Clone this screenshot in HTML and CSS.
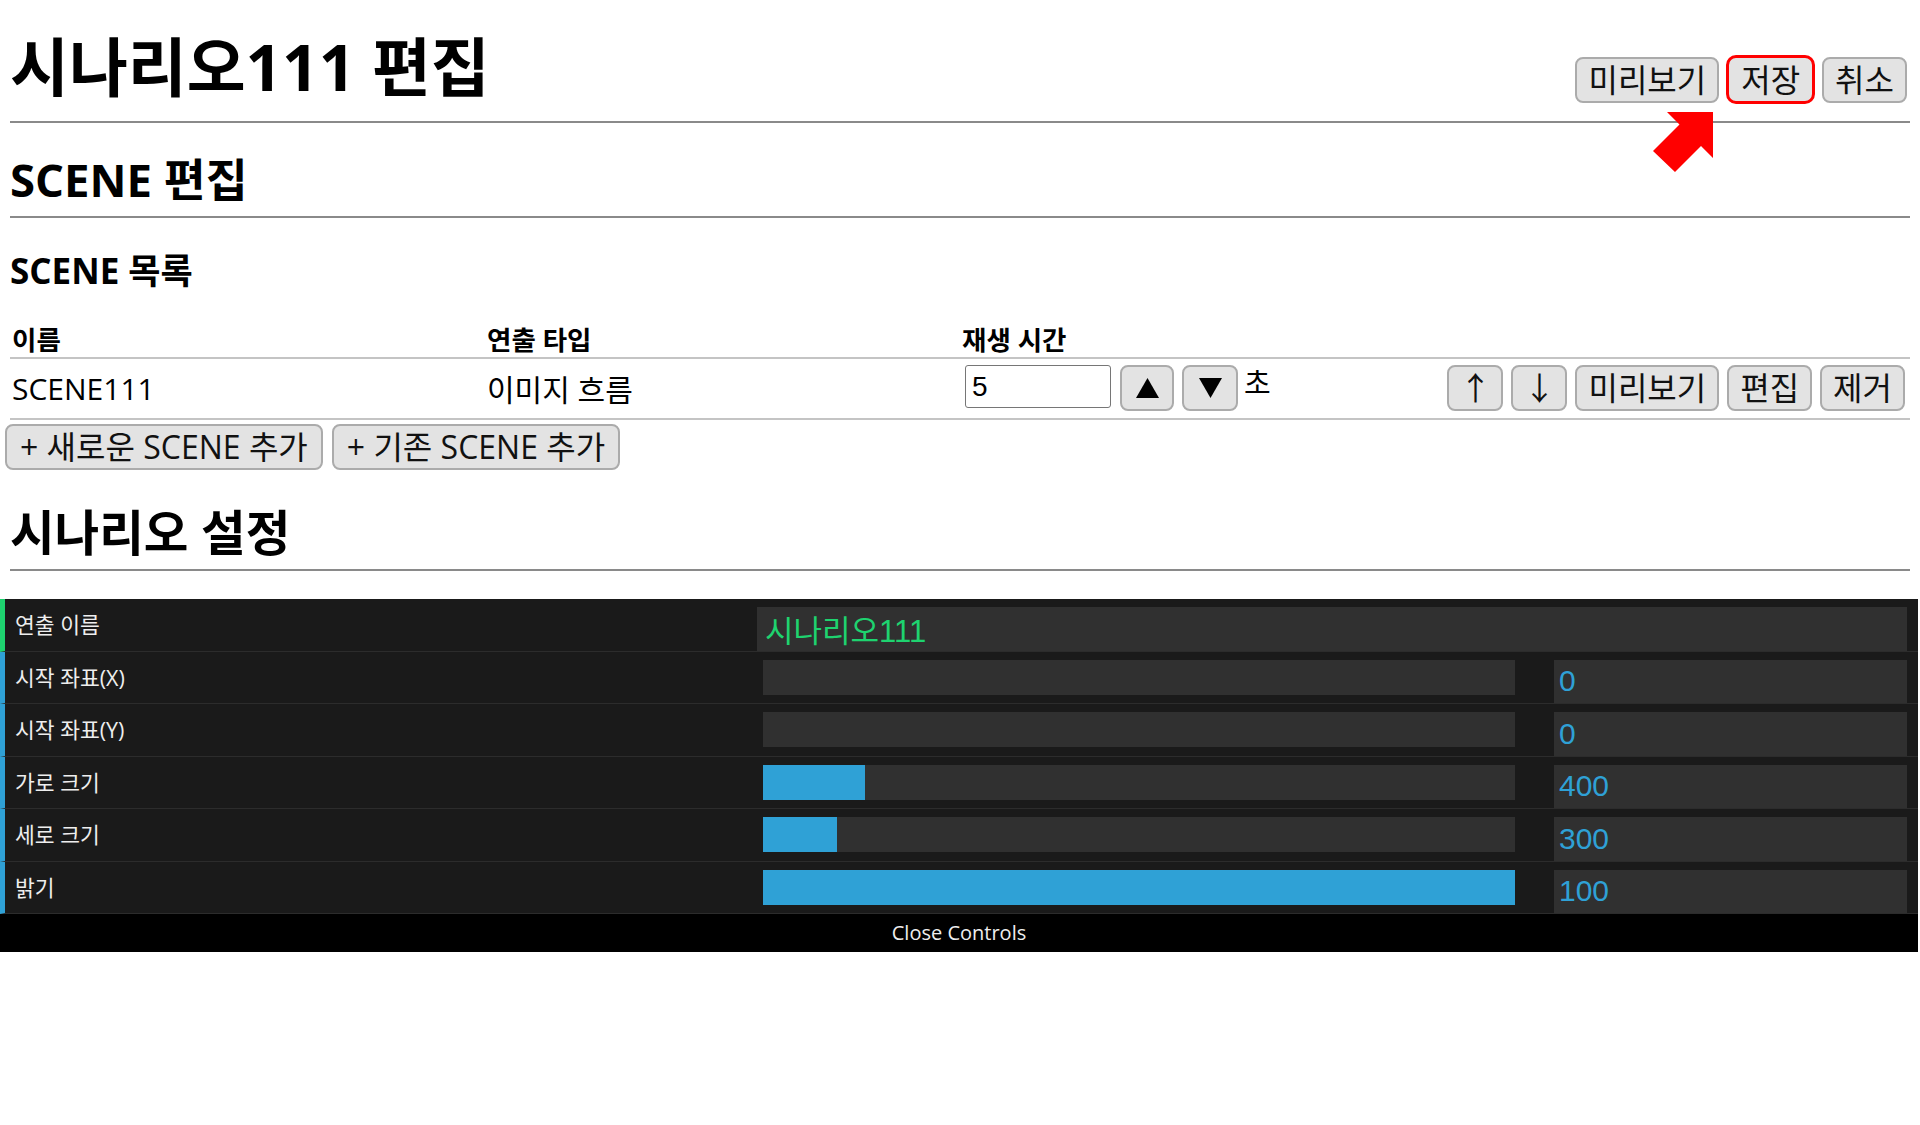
FILE: index.html
```html
<!DOCTYPE html>
<html lang="ko">
<head>
<meta charset="utf-8">
<title>시나리오111 편집</title>
<link rel="stylesheet" href="styles.css">
</head>
<body>
<div class="page">
  <header class="topbar">
    <h1 class="title">시나리오111 편집</h1>
    <div class="top-actions">
      <button class="btn">미리보기</button>
      <button class="btn btn-hl">저장</button>
      <button class="btn">취소</button>
    </div>
  </header>

  <h2 class="section-title scene-edit-title">SCENE 편집</h2>
  <h3 class="sub-title">SCENE 목록</h3>

  <div class="scene-table">
    <div class="th">이름</div>
    <div class="th">연출 타입</div>
    <div class="th">재생 시간</div>
    <div class="th"></div>

    <div class="td">SCENE111</div>
    <div class="td">이미지 흐름</div>
    <div class="td td-time">
      <input class="time-input" type="text" value="5">
      <button class="btn btn-tri btn-up"><svg width="23" height="20" viewBox="0 0 23 20"><polygon points="11.5,0 23,20 0,20" fill="#000"/></svg></button>
      <button class="btn btn-tri btn-down"><svg width="23" height="20" viewBox="0 0 23 20"><polygon points="0,0 23,0 11.5,20" fill="#000"/></svg></button>
      <span class="unit">초</span>
    </div>
    <div class="td td-actions">
      <button class="btn btn-arrow">↑</button>
      <button class="btn btn-arrow">↓</button>
      <button class="btn">미리보기</button>
      <button class="btn">편집</button>
      <button class="btn">제거</button>
    </div>
  </div>

  <div class="add-actions">
    <button class="btn btn-add">+ 새로운 SCENE 추가</button>
    <button class="btn btn-add">+ 기존 SCENE 추가</button>
  </div>

  <h2 class="section-title setting-title">시나리오 설정</h2>
</div>

<div class="gui">
  <div class="gui-row is-string">
    <div class="gui-label">연출 이름</div>
    <input class="gui-text" type="text" value="시나리오111">
  </div>
  <div class="gui-row">
    <div class="gui-label">시작 좌표(X)</div>
    <div class="gui-slider"><div class="slider-fill" style="width:0%"></div></div>
    <input class="gui-number" type="text" value="0">
  </div>
  <div class="gui-row">
    <div class="gui-label">시작 좌표(Y)</div>
    <div class="gui-slider"><div class="slider-fill" style="width:0%"></div></div>
    <input class="gui-number" type="text" value="0">
  </div>
  <div class="gui-row">
    <div class="gui-label">가로 크기</div>
    <div class="gui-slider"><div class="slider-fill" style="width:13.5%"></div></div>
    <input class="gui-number" type="text" value="400">
  </div>
  <div class="gui-row">
    <div class="gui-label">세로 크기</div>
    <div class="gui-slider"><div class="slider-fill" style="width:9.9%"></div></div>
    <input class="gui-number" type="text" value="300">
  </div>
  <div class="gui-row">
    <div class="gui-label">밝기</div>
    <div class="gui-slider"><div class="slider-fill" style="width:100%"></div></div>
    <input class="gui-number" type="text" value="100">
  </div>
  <div class="gui-close">Close Controls</div>
</div>

<svg class="pointer" width="66" height="68" viewBox="0 0 66 68">
  <polygon points="17,4 63,4 63,50 51,38 25,64 3,43 29.5,16.5" fill="#ff0000"/>
</svg>
</body>
</html>
```

FILE: styles.css
```css
* { box-sizing: border-box; }

html, body {
  margin: 0;
  padding: 0;
  background: #ffffff;
}

body {
  position: relative;
  width: 1920px;
  font-family: "Open Sans", "Noto Sans CJK KR", sans-serif;
  color: #000;
}

.page {
  padding: 0 10px;
}

/* ---------- top bar ---------- */
.topbar {
  display: flex;
  justify-content: space-between;
  align-items: flex-end;
  padding-top: 27px;
  padding-bottom: 14px;
  border-bottom: 2px solid #8a8a8a;
}

.title {
  margin: 0;
  font-size: 64px;
  line-height: 80px;
  font-weight: 700;
}

.top-actions {
  display: flex;
  align-items: flex-end;
  gap: 7px;
  margin-bottom: 4px;
  margin-right: 3px;
}

/* ---------- buttons ---------- */
.btn {
  font-family: "Open Sans", "Noto Sans CJK KR", sans-serif;
  font-size: 32px;
  line-height: 42px;
  height: 46px;
  padding: 0 11px;
  border: 2px solid #ababab;
  border-radius: 8px;
  background: #e3e3e3;
  color: #111;
  white-space: nowrap;
}

.btn-hl {
  height: 49px;
  line-height: 43px;
  padding: 0 12px;
  margin-bottom: -1px;
  border: 3px solid #ff0000;
  border-radius: 10px;
}

.btn-tri {
  width: 54px;
  padding: 0;
  display: flex;
  align-items: center;
  justify-content: center;
}

.btn-arrow {
  width: 56px;
  padding: 0;
}

.btn-add {
  padding: 0 13px;
}

/* ---------- section titles ---------- */
.section-title {
  margin: 0;
  font-size: 47px;
  line-height: 56px;
  font-weight: 700;
  padding-bottom: 9px;
  border-bottom: 2px solid #8a8a8a;
}

.scene-edit-title {
  margin-top: 28px;
  font-size: 45.5px;
}

.setting-title {
  margin-top: 34px;
  font-size: 48.5px;
}

.sub-title {
  margin: 33px 0 0;
  font-size: 35px;
  line-height: 40px;
  font-weight: 700;
}

/* ---------- scene table ---------- */
.scene-table {
  margin-top: 34px;
  display: grid;
  grid-template-columns: repeat(4, 1fr);
}

.th {
  font-size: 26.5px;
  font-weight: 700;
  line-height: 30px;
  padding: 0 2px 2px;
  border-bottom: 2px solid #c4c4c4;
}

.td {
  display: flex;
  align-items: center;
  padding: 6px 2px 7px;
  border-bottom: 2px solid #c4c4c4;
  font-size: 30px;
  min-height: 61px;
}

.td-time .time-input {
  width: 146px;
  height: 43px;
  margin-left: 3px;
  margin-top: -3px;
  padding: 0 0 0 6px;
  border: 1px solid #767676;
  border-radius: 3px;
  font-family: "Liberation Sans", sans-serif;
  font-size: 28px;
  color: #000;
  background: #fff;
}

.btn-up { margin-left: 9px; }
.btn-down { margin-left: 8px; width: 56px; }

.unit {
  align-self: flex-start;
  margin-left: 6px;
  line-height: 36px;
  font-size: 29px;
}

.td-actions {
  justify-content: flex-end;
  gap: 8px;
  padding-right: 5px;
}

.add-actions {
  display: flex;
  gap: 9px;
  margin-top: 4px;
  margin-left: -5px;
}

/* ---------- dat.gui style panel ---------- */
.gui {
  margin-top: 28px;
  width: 1918px;
  background: #1a1a1a;
  font-family: "Open Sans", "Noto Sans CJK KR", sans-serif;
}

.gui-row {
  display: flex;
  height: 52.5px;
  border-left: 5px solid #2fa1d6;
  border-bottom: 1px solid #2c2c2c;
  padding: 0 11px 0 10px;
}

.gui-row.is-string {
  border-left-color: #1ed36f;
}

.gui-label {
  flex: none;
  width: 742px;
  font-size: 21.5px;
  line-height: 51.5px;
  color: #eeeeee;
  white-space: nowrap;
  overflow: hidden;
}

.gui-text {
  flex: 1;
  min-width: 0;
  height: 43.5px;
  margin-top: 8px;
  padding: 0 0 0 8px;
  border: 0;
  outline: none;
  background: #303030;
  color: #1ed36f;
  font-family: "Liberation Sans", "Noto Sans CJK KR", sans-serif;
  font-size: 31px;
}

.gui-slider {
  flex: none;
  width: 752px;
  height: 35px;
  margin: 8px 0 0 6px;
  background: #303030;
}

.slider-fill {
  height: 100%;
  background: #2fa1d6;
}

.gui-number {
  flex: none;
  width: 353px;
  height: 43.5px;
  margin: 8px 0 0 auto;
  padding: 0 0 0 5px;
  border: 0;
  outline: none;
  background: #303030;
  color: #2fa1d6;
  font-family: "Liberation Sans", sans-serif;
  font-size: 30px;
}

.gui-close {
  height: 38px;
  line-height: 38px;
  background: #000;
  color: #eeeeee;
  text-align: center;
  font-size: 20px;
}

/* ---------- annotation arrow ---------- */
.pointer {
  position: absolute;
  left: 1650px;
  top: 108px;
}
```
